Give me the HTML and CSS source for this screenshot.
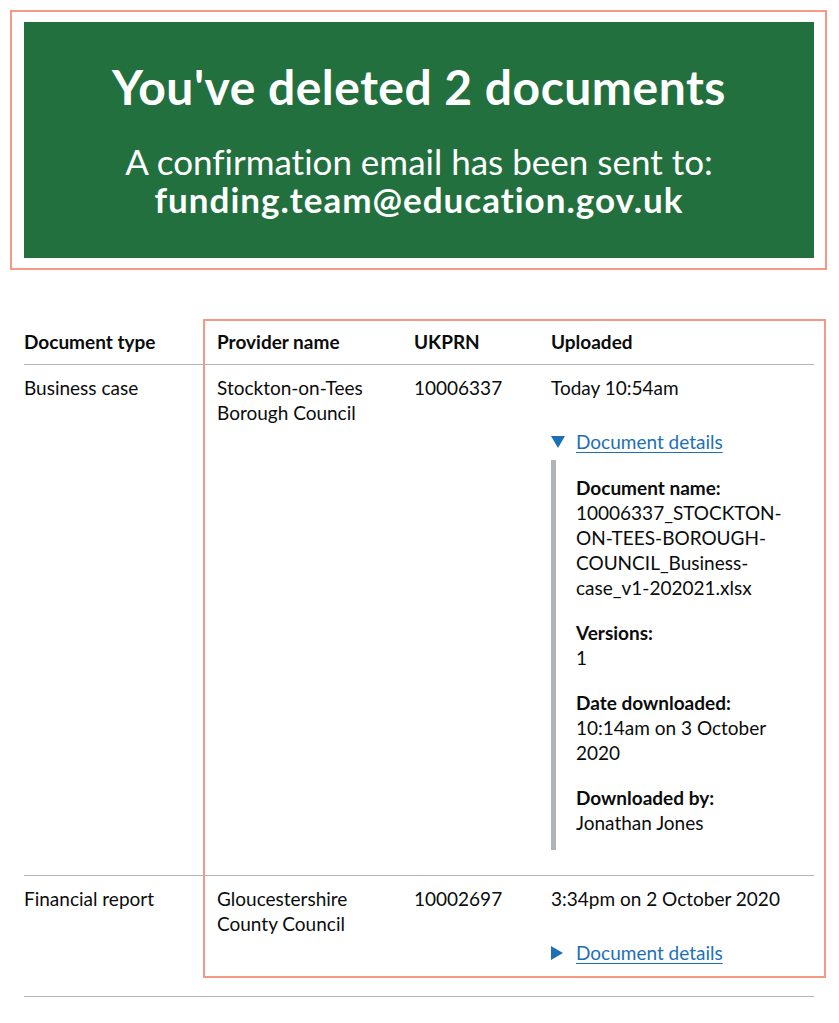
FILE: index.html
```html
<!DOCTYPE html>
<html lang="en">
<head>
<meta charset="utf-8">
<title>Documents deleted</title>
<link rel="stylesheet" href="styles.css">
</head>
<body>
<div class="page">
  <div class="panel">
    <h1 class="panel-title">You've deleted 2 documents</h1>
    <div class="panel-body">A confirmation email has been sent to:<br><strong>funding.team@education.gov.uk</strong></div>
  </div>

  <table class="table">
    <thead>
      <tr>
        <th class="col-type">Document type</th>
        <th class="col-provider">Provider name</th>
        <th class="col-ukprn">UKPRN</th>
        <th class="col-uploaded">Uploaded</th>
      </tr>
    </thead>
    <tbody>
      <tr>
        <td>Business case</td>
        <td>Stockton-on-Tees Borough Council</td>
        <td>10006337</td>
        <td>
          <p class="uploaded">Today 10:54am</p>
          <div class="details open">
            <div class="summary"><span class="tri tri-down"></span><a href="#" class="summary-link">Document details</a></div>
            <div class="details-text">
              <p class="meta"><strong>Document name:</strong><br>10006337_STOCKTON-ON-TEES-BOROUGH-COUNCIL_Business-case_v1-202021.xlsx</p>
              <p class="meta"><strong>Versions:</strong><br>1</p>
              <p class="meta"><strong>Date downloaded:</strong><br>10:14am on 3 October 2020</p>
              <p class="meta"><strong>Downloaded by:</strong><br>Jonathan Jones</p>
            </div>
          </div>
        </td>
      </tr>
      <tr>
        <td>Financial report</td>
        <td>Gloucestershire County Council</td>
        <td>10002697</td>
        <td>
          <p class="uploaded">3:34pm on 2 October 2020</p>
          <div class="details closed">
            <div class="summary"><span class="tri tri-right"></span><a href="#" class="summary-link">Document details</a></div>
          </div>
        </td>
      </tr>
    </tbody>
  </table>
</div>
<div class="highlight highlight-panel"></div>
<div class="highlight highlight-table"></div>
</body>
</html>
```

FILE: styles.css
```css
html, body {
  margin: 0;
  padding: 0;
  background: #ffffff;
}
body {
  font-family: Lato, "Liberation Sans", Arial, sans-serif;
  font-variant-ligatures: none;
  color: #0b0c0c;
  position: relative;
  min-height: 1023px;
}
.page {
  padding: 22px 25px 0 24px;
}
.panel {
  background: #23703f;
  color: #ffffff;
  text-align: center;
  padding: 40px 40px 40px;
  box-sizing: border-box;
  height: 236px;
}
.panel-title {
  margin: 0 0 30px;
  font-size: 48px;
  line-height: 50px;
  font-weight: 700;
  letter-spacing: 0.5px;
}
.panel-body {
  font-size: 35px;
  line-height: 38px;
}
.panel-body strong {
  font-weight: 700;
  letter-spacing: 1px;
}
.table {
  margin-top: 61px;
  width: 790px;
  border-collapse: collapse;
  border-spacing: 0;
  font-size: 19px;
  line-height: 25px;
}
.table th,
.table td {
  text-align: left;
  vertical-align: top;
  padding: 10px 20px 10px 0;
  border-bottom: 1px solid #b1b4b6;
}
.table th {
  font-weight: 700;
}
.table th:last-child,
.table td:last-child {
  padding-right: 0;
}
.col-type { width: 173px; }
.col-provider { width: 177px; }
.col-ukprn { width: 117px; }
.uploaded {
  margin: 0 0 29px;
}
.details {
  margin-bottom: 15px;
}
.details.closed {
  margin-bottom: 21px;
}
.summary {
  display: flex;
  align-items: center;
  margin-bottom: 6px;
}
.tri {
  display: inline-block;
  width: 0;
  height: 0;
  border-style: solid;
  border-color: transparent;
  margin-right: 11px;
}
.tri-down {
  border-width: 12px 7px 0 7px;
  border-top-color: #1d70b8;
}
.tri-right {
  border-width: 7px 0 7px 12px;
  border-left-color: #1d70b8;
  margin-right: 13px;
}
.summary-link {
  color: #1d70b8;
  text-decoration: underline;
  text-decoration-thickness: 1px;
  text-underline-offset: 3px;
}
.details-text {
  border-left: 5px solid #b1b4b6;
  padding: 15px 30px 15px 20px;
}
.meta {
  margin: 0 0 20px;
}
.meta:last-child {
  margin-bottom: 0;
}
.highlight {
  position: absolute;
  border: 2px solid #f59886;
  box-sizing: border-box;
  pointer-events: none;
}
.highlight-panel {
  left: 10px;
  top: 10px;
  width: 817px;
  height: 260px;
}
.highlight-table {
  left: 203px;
  top: 319px;
  width: 623px;
  height: 659px;
}
```
